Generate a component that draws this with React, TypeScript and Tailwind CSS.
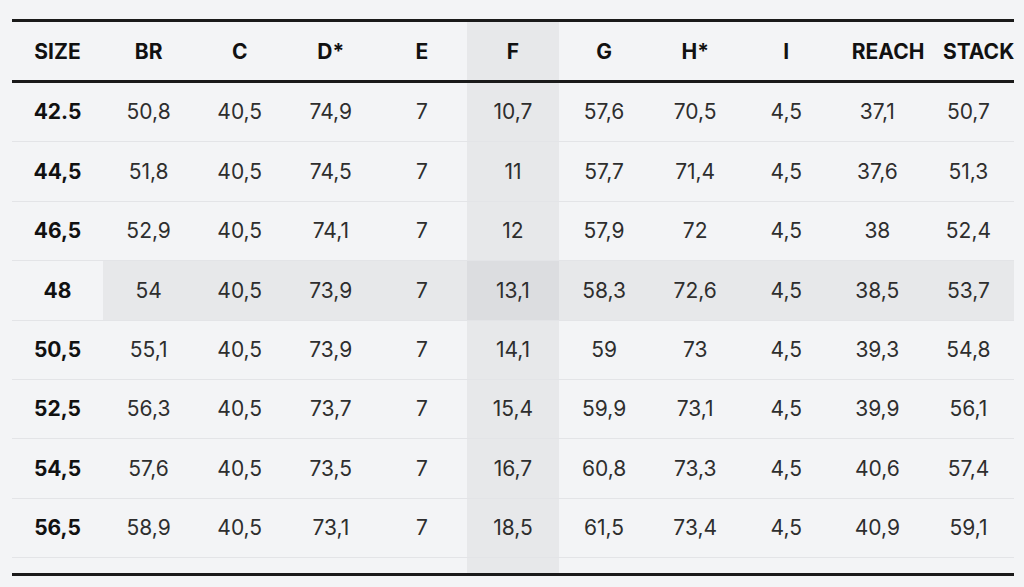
import React from 'react';

// Frame geometry chart: sizes down the side, measurements across
const headers = ['SIZE', 'BR', 'C', 'D*', 'E', 'F', 'G', 'H*', 'I', 'REACH', 'STACK'];

const rows: string[][] = [
  ['42.5', '50,8', '40,5', '74,9', '7', '10,7', '57,6', '70,5', '4,5', '37,1', '50,7'],
  ['44,5', '51,8', '40,5', '74,5', '7', '11', '57,7', '71,4', '4,5', '37,6', '51,3'],
  ['46,5', '52,9', '40,5', '74,1', '7', '12', '57,9', '72', '4,5', '38', '52,4'],
  ['48', '54', '40,5', '73,9', '7', '13,1', '58,3', '72,6', '4,5', '38,5', '53,7'],
  ['50,5', '55,1', '40,5', '73,9', '7', '14,1', '59', '73', '4,5', '39,3', '54,8'],
  ['52,5', '56,3', '40,5', '73,7', '7', '15,4', '59,9', '73,1', '4,5', '39,9', '56,1'],
  ['54,5', '57,6', '40,5', '73,5', '7', '16,7', '60,8', '73,3', '4,5', '40,6', '57,4'],
  ['56,5', '58,9', '40,5', '73,1', '7', '18,5', '61,5', '73,4', '4,5', '40,9', '59,1'],
];

const HIGHLIGHT_COL = 5;
const HIGHLIGHT_ROW = 3;

function cellBg(row: number, col: number) {
  const inRow = row === HIGHLIGHT_ROW && col > 0;
  const inCol = col === HIGHLIGHT_COL;
  if (inRow && inCol) return 'bg-[#dcdde0]';
  if (inRow || inCol) return 'bg-[#e7e8ea]';
  return '';
}

export default function App() {
  return (
    <div
      className="min-h-[587px] w-[1024px] bg-[#f3f4f6] pt-[19px] pl-[12px]"
      style={{ fontFamily: 'Inter, "Noto Sans", sans-serif' }}
    >
      <div className="w-[1002px]">
        {/* Header */}
        <div className="grid grid-cols-11 border-y-[3px] border-[#1a1a1a]">
          {headers.map((h, i) => (
            <div
              key={h}
              className={`flex h-[58px] items-center justify-center whitespace-nowrap px-5 pt-[2px] text-[21px] font-bold text-[#111] ${
                i === HIGHLIGHT_COL ? 'bg-[#e7e8ea]' : ''
              }`}
            >
              <span className={i >= 9 ? 'w-full text-left' : ''}>{h}</span>
            </div>
          ))}
        </div>

        {/* Body */}
        {rows.map((r, ri) => (
          <div key={r[0]} className="grid h-[59.4px] grid-cols-11 border-b border-[#e3e4e7]">
            {r.map((v, ci) => (
              <div
                key={ci}
                className={`flex items-center justify-center text-[21px] ${
                  ci === 0 ? 'font-bold text-[#111]' : 'text-[#2e2e2e]'
                } ${cellBg(ri, ci)}`}
              >
                {v}
              </div>
            ))}
          </div>
        ))}

        {/* Footer spacer */}
        <div className="grid h-[18px] grid-cols-11 border-b-[3px] border-[#1a1a1a]">
          {headers.map((h, i) => (
            <div key={h} className={i === HIGHLIGHT_COL ? 'bg-[#e7e8ea]' : ''} />
          ))}
        </div>
      </div>
    </div>
  );
}
